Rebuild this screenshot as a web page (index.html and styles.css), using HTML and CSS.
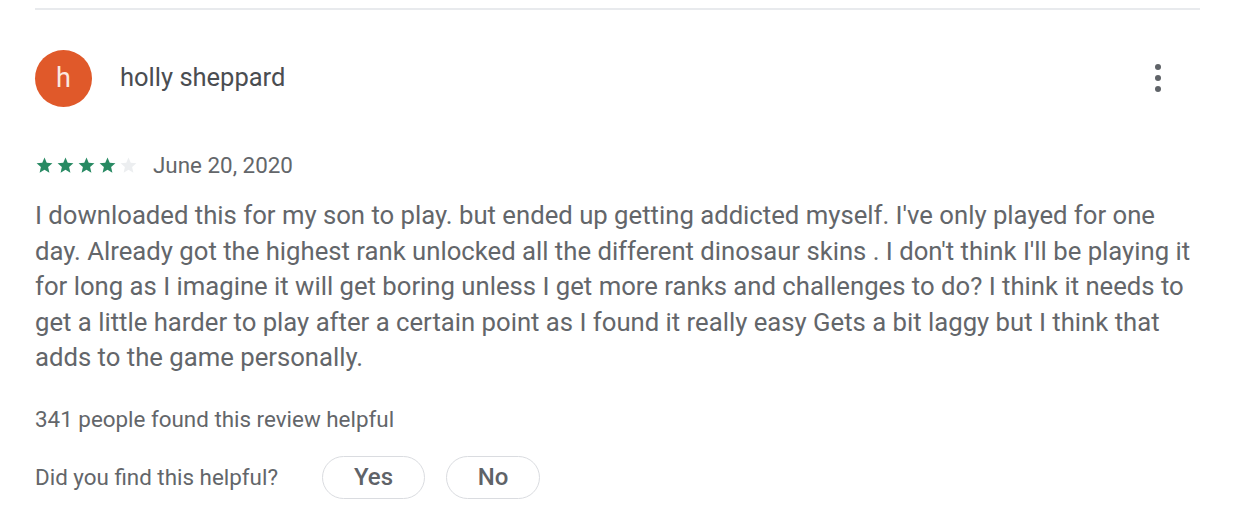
FILE: index.html
```html
<!DOCTYPE html>
<html>
<head>
<meta charset="utf-8">
<link rel="stylesheet" href="styles.css">
</head>
<body>
<div class="review">
  <div class="divider"></div>
  <div class="header">
    <div class="avatar">h</div>
    <div class="name">holly sheppard</div>
    <div class="menu" aria-label="More">
      <span></span><span></span><span></span>
    </div>
  </div>
  <div class="meta">
    <div class="stars">
      <svg class="star on" viewBox="0 0 24 24"><path d="M12 17.27L18.18 21l-1.64-7.03L22 9.24l-7.19-.61L12 2 9.19 8.63 2 9.24l5.46 4.73L5.82 21z"/></svg>
      <svg class="star on" viewBox="0 0 24 24"><path d="M12 17.27L18.18 21l-1.64-7.03L22 9.24l-7.19-.61L12 2 9.19 8.63 2 9.24l5.46 4.73L5.82 21z"/></svg>
      <svg class="star on" viewBox="0 0 24 24"><path d="M12 17.27L18.18 21l-1.64-7.03L22 9.24l-7.19-.61L12 2 9.19 8.63 2 9.24l5.46 4.73L5.82 21z"/></svg>
      <svg class="star on" viewBox="0 0 24 24"><path d="M12 17.27L18.18 21l-1.64-7.03L22 9.24l-7.19-.61L12 2 9.19 8.63 2 9.24l5.46 4.73L5.82 21z"/></svg>
      <svg class="star off" viewBox="0 0 24 24"><path d="M12 17.27L18.18 21l-1.64-7.03L22 9.24l-7.19-.61L12 2 9.19 8.63 2 9.24l5.46 4.73L5.82 21z"/></svg>
    </div>
    <span class="date">June 20, 2020</span>
  </div>
  <p class="body">I downloaded this for my son to play. but ended up getting addicted myself. I've only played for one day. Already got the highest rank unlocked all the different dinosaur skins . I don't think I'll be playing it for long as I imagine it will get boring unless I get more ranks and challenges to do? I think it needs to get a little harder to play after a certain point as I found it really easy Gets a bit laggy but I think that adds to the game personally.</p>
  <div class="helpful-count">341 people found this review helpful</div>
  <div class="feedback">
    <span class="question">Did you find this helpful?</span>
    <button class="pill yes">Yes</button>
    <button class="pill no">No</button>
  </div>
</div>
</body>
</html>
```

FILE: styles.css
```css
html, body {
  margin: 0;
  padding: 0;
  background: #ffffff;
}
body {
  font-family: Roboto, "Liberation Sans", Arial, sans-serif;
  color: #63666a;
}
.review {
  width: 1165px;
  margin-left: 35px;
  padding-top: 8px;
}
.divider {
  height: 2px;
  background: #e8eaed;
}
.header {
  display: flex;
  align-items: center;
  margin-top: 39px;
  height: 58px;
}
.avatar {
  width: 57px;
  height: 57px;
  border-radius: 50%;
  background: #e0592a;
  color: #fbe9e0;
  font-size: 27px;
  display: flex;
  align-items: center;
  justify-content: center;
  flex: none;
}
.name {
  margin-left: 28px;
  font-size: 25.5px;
  color: #4a4d51;
  flex: 1;
  padding-bottom: 2px;
}
.menu {
  display: flex;
  flex-direction: column;
  gap: 5px;
  margin-right: 39px;
}
.menu span {
  width: 6px;
  height: 6px;
  border-radius: 50%;
  background: #5f6368;
}
.meta {
  display: flex;
  align-items: center;
  margin-top: 47px;
  height: 22px;
}
.stars {
  display: flex;
  gap: 2px;
  margin-left: 0;
}
.star {
  width: 19px;
  height: 19px;
}
.star.on { fill: #288a63; }
.star.off { fill: #eceef0; }
.date {
  margin-left: 15px;
  font-size: 22.4px;
  color: #63666a;
}
.body {
  margin: 22px 0 0 0;
  font-size: 25.7px;
  line-height: 35.6px;
  color: #63666a;
  width: 1165px;
}
.helpful-count {
  margin-top: 30px;
  font-size: 22.4px;
  color: #63666a;
}
.feedback {
  display: flex;
  align-items: center;
  margin-top: 24px;
}
.question {
  font-size: 22.4px;
  color: #63666a;
}
.pill {
  font-family: Roboto, "Liberation Sans", Arial, sans-serif;
  background: #fff;
  border: 1.5px solid #dadce0;
  border-radius: 22px;
  height: 43px;
  font-size: 24px;
  color: #5f6368;
  font-weight: 500;
  padding: 0;
}
.yes {
  margin-left: 44px;
  width: 103px;
}
.no {
  margin-left: 21px;
  width: 94px;
}
```
